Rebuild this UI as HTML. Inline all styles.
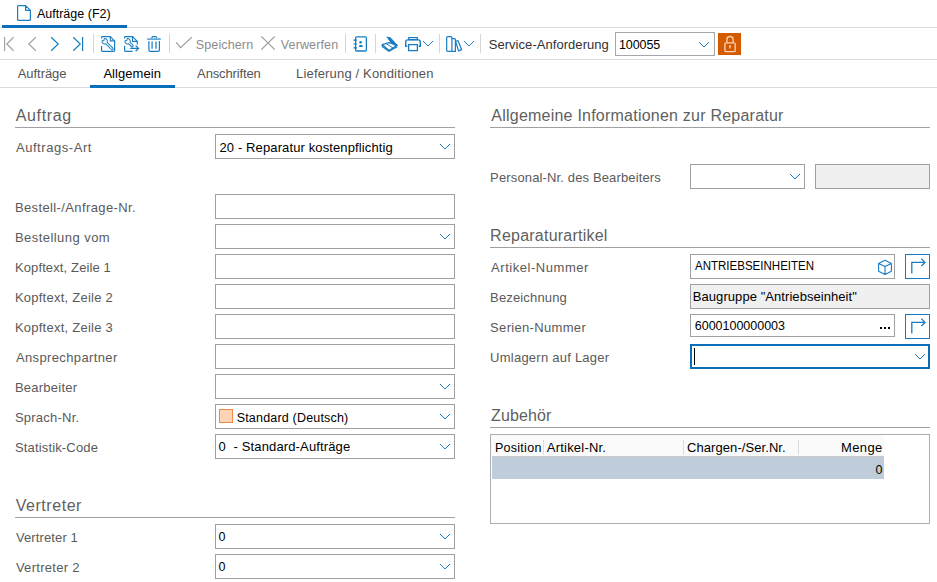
<!DOCTYPE html>
<html><head><meta charset="utf-8">
<style>
*{box-sizing:border-box}
html,body{margin:0;padding:0}
body{width:937px;height:582px;position:relative;overflow:hidden;background:#fff;font-family:"Liberation Sans",sans-serif;color:#000}
.a{position:absolute}
.t{position:absolute;white-space:nowrap;line-height:1}
</style></head><body>
<div class="a" style="left:0px;top:27px;width:937px;height:1px;background:#dadada"></div>
<div class="a" style="left:2px;top:25px;width:125px;height:3px;background:#0a6eb8"></div>
<div class="a" style="left:0px;top:59px;width:937px;height:1px;background:#dadada"></div>
<div class="a" style="left:615px;top:32px;width:100px;height:24px;border:1px solid #a4a8ae;background:#fff"></div>
<div class="a" style="left:718px;top:33px;width:23px;height:22px;background:#d45b00"></div>
<div class="a" style="left:0px;top:87px;width:937px;height:1px;background:#dadada"></div>
<div class="a" style="left:90px;top:85px;width:85px;height:3px;background:#0a6eb8"></div>
<div class="a" style="left:15px;top:127px;width:440px;height:1px;background:#a0a0a0"></div>
<div class="a" style="left:215px;top:134px;width:240px;height:25px;border:1px solid #a0a0a0;background:#fff"></div>
<div class="a" style="left:215px;top:194px;width:240px;height:25px;border:1px solid #a0a0a0;background:#fff"></div>
<div class="a" style="left:215px;top:224px;width:240px;height:25px;border:1px solid #a0a0a0;background:#fff"></div>
<div class="a" style="left:215px;top:254px;width:240px;height:25px;border:1px solid #a0a0a0;background:#fff"></div>
<div class="a" style="left:215px;top:284px;width:240px;height:25px;border:1px solid #a0a0a0;background:#fff"></div>
<div class="a" style="left:215px;top:314px;width:240px;height:25px;border:1px solid #a0a0a0;background:#fff"></div>
<div class="a" style="left:215px;top:344px;width:240px;height:25px;border:1px solid #a0a0a0;background:#fff"></div>
<div class="a" style="left:215px;top:374px;width:240px;height:25px;border:1px solid #a0a0a0;background:#fff"></div>
<div class="a" style="left:215px;top:404px;width:240px;height:25px;border:1px solid #a0a0a0;background:#fff"></div>
<div class="a" style="left:215px;top:434px;width:240px;height:25px;border:1px solid #a0a0a0;background:#fff"></div>
<div class="a" style="left:215px;top:524px;width:240px;height:25px;border:1px solid #a0a0a0;background:#fff"></div>
<div class="a" style="left:215px;top:554px;width:240px;height:25px;border:1px solid #a0a0a0;background:#fff"></div>
<div class="a" style="left:219px;top:409px;width:14px;height:14px;border:1px solid #f0884a;background:#fdd3b6"></div>
<div class="a" style="left:15px;top:517px;width:440px;height:1px;background:#a0a0a0"></div>
<div class="a" style="left:490px;top:127px;width:440px;height:1px;background:#a0a0a0"></div>
<div class="a" style="left:690px;top:164px;width:115px;height:25px;border:1px solid #a0a0a0;background:#fff"></div>
<div class="a" style="left:815px;top:164px;width:115px;height:25px;border:1px solid #a0a0a0;background:#f0f0f0"></div>
<div class="a" style="left:490px;top:247px;width:440px;height:1px;background:#a0a0a0"></div>
<div class="a" style="left:690px;top:254px;width:205px;height:25px;border:1px solid #a0a0a0;background:#fff"></div>
<div class="a" style="left:905px;top:254px;width:25px;height:25px;border:1px solid #1a78c2;background:#fff"></div>
<div class="a" style="left:690px;top:284px;width:240px;height:25px;border:1px solid #a0a0a0;background:#f0f0f0"></div>
<div class="a" style="left:690px;top:314px;width:205px;height:23px;border:1px solid #a0a0a0;background:#fff"></div>
<div class="a" style="left:905px;top:314px;width:25px;height:25px;border:1px solid #1a78c2;background:#fff"></div>
<div class="a" style="left:690px;top:344px;width:240px;height:25px;border:2px solid #0a6eb8;background:#fff"></div>
<div class="a" style="left:694px;top:348px;width:1px;height:17px;background:#000"></div>
<div class="a" style="left:490px;top:427px;width:440px;height:1px;background:#a0a0a0"></div>
<div class="a" style="left:490px;top:434px;width:440px;height:90px;border:1px solid #abadb3;background:#fff"></div>
<div class="a" style="left:491px;top:435px;width:393px;height:21px;background:#fafafa"></div>
<div class="a" style="left:492px;top:456px;width:392px;height:1px;background:#c8c8c8"></div>
<div class="a" style="left:492px;top:457px;width:392px;height:22px;background:#bfcddb"></div>
<div class="a" style="left:543px;top:440px;width:1px;height:15px;background:#dcdcdc"></div>
<div class="a" style="left:683px;top:440px;width:1px;height:15px;background:#dcdcdc"></div>
<div class="a" style="left:798px;top:440px;width:1px;height:15px;background:#dcdcdc"></div>
<div class="t" style="left:36.90px;top:8px;font-size:12.5px;color:#000;letter-spacing:0.017px;">Aufträge (F2)</div>
<div class="t" style="left:195.80px;top:39px;font-size:12.5px;color:#8c8c8c;letter-spacing:0.125px;">Speichern</div>
<div class="t" style="left:280.80px;top:39px;font-size:12.5px;color:#8c8c8c;letter-spacing:0.125px;">Verwerfen</div>
<div class="t" style="left:488.70px;top:38px;font-size:13px;color:#333;letter-spacing:0.050px;">Service-Anforderung</div>
<div class="t" style="left:618.90px;top:39px;font-size:12.5px;color:#000;letter-spacing:-0.060px;">100055</div>
<div class="t" style="left:17.70px;top:67px;font-size:13px;color:#555;letter-spacing:-0.043px;">Aufträge</div>
<div class="t" style="left:103.40px;top:67px;font-size:13px;color:#000;letter-spacing:0.062px;">Allgemein</div>
<div class="t" style="left:197.10px;top:67px;font-size:13px;color:#555;letter-spacing:-0.130px;">Anschriften</div>
<div class="t" style="left:296.10px;top:67px;font-size:13px;color:#555;letter-spacing:0.164px;">Lieferung / Konditionen</div>
<div class="t" style="left:15.70px;top:108px;font-size:16px;color:#5f5f5f;letter-spacing:0.650px;">Auftrag</div>
<div class="t" style="left:15.90px;top:141px;font-size:13px;color:#5a5a5a;letter-spacing:0.564px;">Auftrags-Art</div>
<div class="t" style="left:14.90px;top:201px;font-size:13px;color:#5a5a5a;letter-spacing:0.384px;">Bestell-/Anfrage-Nr.</div>
<div class="t" style="left:14.90px;top:231px;font-size:13px;color:#5a5a5a;letter-spacing:0.454px;">Bestellung vom</div>
<div class="t" style="left:14.90px;top:261px;font-size:13px;color:#5a5a5a;letter-spacing:0.125px;">Kopftext, Zeile 1</div>
<div class="t" style="left:14.90px;top:291px;font-size:13px;color:#5a5a5a;letter-spacing:0.244px;">Kopftext, Zeile 2</div>
<div class="t" style="left:14.90px;top:321px;font-size:13px;color:#5a5a5a;letter-spacing:0.244px;">Kopftext, Zeile 3</div>
<div class="t" style="left:15.90px;top:351px;font-size:13px;color:#5a5a5a;letter-spacing:0.379px;">Ansprechpartner</div>
<div class="t" style="left:14.90px;top:381px;font-size:13px;color:#5a5a5a;letter-spacing:0.256px;">Bearbeiter</div>
<div class="t" style="left:14.90px;top:411px;font-size:13px;color:#5a5a5a;letter-spacing:0.233px;">Sprach-Nr.</div>
<div class="t" style="left:14.90px;top:441px;font-size:13px;color:#5a5a5a;letter-spacing:0.162px;">Statistik-Code</div>
<div class="t" style="left:15.90px;top:531px;font-size:13px;color:#5a5a5a;letter-spacing:0.120px;">Vertreter 1</div>
<div class="t" style="left:15.90px;top:561px;font-size:13px;color:#5a5a5a;letter-spacing:0.280px;">Vertreter 2</div>
<div class="t" style="left:219.50px;top:141px;font-size:13px;color:#000;letter-spacing:0.117px;">20 - Reparatur kostenpflichtig</div>
<div class="t" style="left:218.60px;top:440px;font-size:13px;color:#000;letter-spacing:0.143px;">0&nbsp; - Standard-Aufträge</div>
<div class="t" style="left:218.40px;top:531px;font-size:12.5px;color:#000;">0</div>
<div class="t" style="left:218.40px;top:561px;font-size:12.5px;color:#000;">0</div>
<div class="t" style="left:236.70px;top:412px;font-size:12.5px;color:#000;letter-spacing:0.188px;">Standard (Deutsch)</div>
<div class="t" style="left:15.70px;top:498px;font-size:16px;color:#5f5f5f;letter-spacing:0.550px;">Vertreter</div>
<div class="t" style="left:491.30px;top:108px;font-size:16px;color:#5f5f5f;letter-spacing:0.227px;">Allgemeine Informationen zur Reparatur</div>
<div class="t" style="left:490.10px;top:171px;font-size:13px;color:#5a5a5a;letter-spacing:0.141px;">Personal-Nr. des Bearbeiters</div>
<div class="t" style="left:490.10px;top:228px;font-size:16px;color:#5f5f5f;letter-spacing:0.233px;">Reparaturartikel</div>
<div class="t" style="left:491.10px;top:261px;font-size:13px;color:#5a5a5a;letter-spacing:0.538px;">Artikel-Nummer</div>
<div class="t" style="left:694.80px;top:260px;font-size:12.5px;color:#000;transform:scaleX(0.9217);transform-origin:0 0;">ANTRIEBSEINHEITEN</div>
<div class="t" style="left:490.10px;top:291px;font-size:13px;color:#5a5a5a;letter-spacing:0.150px;">Bezeichnung</div>
<div class="t" style="left:692.80px;top:290px;font-size:13px;color:#000;letter-spacing:0.062px;">Baugruppe "Antriebseinheit"</div>
<div class="t" style="left:490.10px;top:321px;font-size:13px;color:#5a5a5a;letter-spacing:0.325px;">Serien-Nummer</div>
<div class="t" style="left:694.80px;top:320px;font-size:12.5px;color:#000;letter-spacing:-0.017px;">6000100000003</div>
<div class="t" style="left:490.10px;top:351px;font-size:13px;color:#5a5a5a;letter-spacing:0.241px;">Umlagern auf Lager</div>
<div class="t" style="left:491.10px;top:408px;font-size:16px;color:#5f5f5f;letter-spacing:0.117px;">Zubehör</div>
<div class="t" style="left:494.90px;top:442px;font-size:12.5px;color:#000;letter-spacing:0.286px;">Position</div>
<div class="t" style="left:546.80px;top:441px;font-size:13px;color:#000;letter-spacing:0.210px;">Artikel-Nr.</div>
<div class="t" style="left:687.00px;top:441px;font-size:13px;color:#000;letter-spacing:0.073px;">Chargen-/Ser.Nr.</div>
<div class="t" style="left:840.90px;top:441px;font-size:13px;color:#000;letter-spacing:0.425px;">Menge</div>
<div class="t" style="left:875.50px;top:464px;font-size:12.5px;color:#000;">0</div>
<svg style="position:absolute;left:0;top:0" width="937" height="582" viewBox="0 0 937 582">
<path d="M17.6 6.6 Q17.6 5.6 18.6 5.6 H25.6 L30.4 10.4 V19.4 Q30.4 20.4 29.4 20.4 H18.6 Q17.6 20.4 17.6 19.4 Z M25.6 5.6 V10.4 H30.4" fill="none" stroke="#1a7dc2" stroke-width="1.2" stroke-linejoin="round"/>
<path d="M4.6 37 V51" stroke="#a3a3a3" stroke-width="1.2"/>
<path d="M13.7 37.2 L6.8 44 L13.7 50.8" fill="none" stroke="#a3a3a3" stroke-width="1.2"/>
<path d="M35.8 37.2 L28.8 44 L35.8 50.8" fill="none" stroke="#a3a3a3" stroke-width="1.2"/>
<path d="M51.2 37.2 L58.2 44 L51.2 50.8" fill="none" stroke="#1a7dc2" stroke-width="1.2"/>
<path d="M73.3 37.2 L80.2 44 L73.3 50.8" fill="none" stroke="#1a7dc2" stroke-width="1.2"/>
<path d="M82.6 37 V51" stroke="#1a7dc2" stroke-width="1.2"/>
<path d="M93.5 34 V53" stroke="#d6d6d6" stroke-width="1"/>
<path d="M169.5 34 V53" stroke="#d6d6d6" stroke-width="1"/>
<path d="M345.5 34 V53" stroke="#d6d6d6" stroke-width="1"/>
<path d="M375.5 34 V53" stroke="#d6d6d6" stroke-width="1"/>
<path d="M439.5 34 V53" stroke="#d6d6d6" stroke-width="1"/>
<path d="M480.5 34 V53" stroke="#d6d6d6" stroke-width="1"/>
<path d="M101.6 38.4 V37.4 Q101.6 36.6 102.4 36.6 H110.3 L114.6 40.9 V50.6 Q114.6 51.4 113.8 51.4 H102.4 Q101.6 51.4 101.6 50.6 V46" fill="none" stroke="#1a7dc2" stroke-width="1.2"/>
<path d="M110.3 36.6 V40.9 H114.6" fill="none" stroke="#1a7dc2" stroke-width="1.1"/>
<g transform="translate(104.7 41.3) rotate(45)"><path d="M2.5 -1.0 A2.7 2.7 0 0 0 -2.2 -1.55 L-1.3 -0.45 V0.45 L-2.2 1.55 A2.7 2.7 0 0 0 2.5 1.0 H10.6 A1.0 1.0 0 0 0 10.6 -1.0 Z" fill="none" stroke="#1a7dc2" stroke-width="1" stroke-linejoin="round"/></g>
<path d="M124.6 38.4 V37.4 Q124.6 36.6 125.4 36.6 H132.5 L137.3 41.4 V44.6 M124.6 46 V50.6 Q124.6 51.4 125.4 51.4 H132.6" fill="none" stroke="#1a7dc2" stroke-width="1.2"/>
<path d="M132.5 36.6 V41.4 H137.3" fill="none" stroke="#1a7dc2" stroke-width="1.1"/>
<g transform="translate(127.6 41.3) rotate(45)"><path d="M2.5 -1.0 A2.7 2.7 0 0 0 -2.2 -1.55 L-1.3 -0.45 V0.45 L-2.2 1.55 A2.7 2.7 0 0 0 2.5 1.0 H6.4 A1.0 1.0 0 0 0 6.4 -1.0 Z" fill="none" stroke="#1a7dc2" stroke-width="1" stroke-linejoin="round"/></g>
<path d="M130.3 48.4 H138.6 M135.6 45.5 L138.6 48.4 L135.6 51.3" fill="none" stroke="#1a7dc2" stroke-width="1.2"/>
<path d="M151.6 38.3 L152.4 36.6 H156 L156.8 38.3" fill="none" stroke="#1a7dc2" stroke-width="1.1"/>
<path d="M147.2 39.1 H160.8" stroke="#4a9bd3" stroke-width="1.5"/>
<path d="M148.9 41 V50.2 Q148.9 51.4 150.1 51.4 H158.2 Q159.4 51.4 159.4 50.2 V41" fill="none" stroke="#1a7dc2" stroke-width="1.2"/>
<path d="M152.1 41.5 V48.8 M156 41.5 V48.8" stroke="#4a9bd3" stroke-width="1.6"/>
<path d="M176.2 42.3 L180.6 47.6 L191.8 37.2" fill="none" stroke="#9a9a9a" stroke-width="1.1"/>
<path d="M261.3 36.4 L274.8 49.6 M274.8 36.4 L261.3 49.6" fill="none" stroke="#9a9a9a" stroke-width="1.2"/>
<rect x="355.6" y="36.8" width="10.8" height="14.2" rx="1" fill="none" stroke="#1a7dc2" stroke-width="1.3"/>
<path d="M353.4 40.2 H357 M353.4 44 H357 M353.4 47.9 H357" stroke="#1a7dc2" stroke-width="1.2"/>
<circle cx="360.6" cy="42.2" r="1.3" fill="#1a7dc2"/>
<path d="M358.8 47 Q359.2 44.8 360.9 44.8 Q362.6 44.8 363 47 Z" fill="#1a7dc2"/>
<path d="M386.2 36.4 L390.4 37.2 L397.8 45.2 L396 46.4 L390.4 42.6 Z" fill="#1a7dc2"/>
<path d="M382.2 44.6 L389 42.6 L397.2 45.4 L389 50.6 Z" fill="none" stroke="#1a7dc2" stroke-width="1.3" stroke-linejoin="round"/>
<path d="M382.2 44.6 L382.4 46.6 L389 51.2 L397.2 46.8" fill="none" stroke="#1a7dc2" stroke-width="1.2"/>
<path d="M386 43.5 L393 48" stroke="#1a7dc2" stroke-width="1"/>
<rect x="408.7" y="37.6" width="8.6" height="2" fill="none" stroke="#1a7dc2" stroke-width="1.2"/>
<path d="M407.2 46.3 H405.7 V42 Q405.7 39.9 407.8 39.9 H418.2 Q420.3 39.9 420.3 42 V46.3 H418.8" fill="none" stroke="#1a7dc2" stroke-width="1.4"/>
<rect x="408.6" y="44.6" width="8.8" height="6" fill="none" stroke="#1a7dc2" stroke-width="1.3"/>
<path d="M423 41h1v1h-1zM428 45h1v1h-1zM424 42h1v1h-1zM429 44h1v1h-1zM425 43h1v1h-1zM430 43h1v1h-1zM426 44h1v1h-1zM431 42h1v1h-1zM427 45h1v1h-1zM432 41h1v1h-1z" fill="#1f7fc4" shape-rendering="crispEdges"/>
<rect x="446.7" y="36.7" width="5.2" height="14.6" rx="1" fill="none" stroke="#1a7dc2" stroke-width="1.2"/>
<path d="M451.9 38.6 H454.3 Q455.2 38.6 455.4 39.6 V51.3 H451.9" fill="none" stroke="#1a7dc2" stroke-width="1.2"/>
<path d="M455.6 41.5 L457.9 40.5 L461.6 49.6 L458.6 50.9 Z" fill="none" stroke="#1a7dc2" stroke-width="1.2" stroke-linejoin="round"/>
<path d="M464 41h1v1h-1zM469 45h1v1h-1zM465 42h1v1h-1zM470 44h1v1h-1zM466 43h1v1h-1zM471 43h1v1h-1zM467 44h1v1h-1zM472 42h1v1h-1zM468 45h1v1h-1zM473 41h1v1h-1z" fill="#1f7fc4" shape-rendering="crispEdges"/>
<path d="M699 42h1v1h-1zM704 46h1v1h-1zM700 43h1v1h-1zM705 45h1v1h-1zM701 44h1v1h-1zM706 44h1v1h-1zM702 45h1v1h-1zM707 43h1v1h-1zM703 46h1v1h-1zM708 42h1v1h-1z" fill="#1f7fc4" shape-rendering="crispEdges"/>
<path d="M726.9 42.6 V39.6 A3.1 3.1 0 0 1 733.1 39.6 V42.6" fill="none" stroke="#f9d3b8" stroke-width="1.3"/>
<rect x="724.9" y="42.9" width="10.3" height="8.7" rx="1.2" fill="none" stroke="#f9d3b8" stroke-width="1.3"/>
<circle cx="730" cy="46.2" r="1" fill="#f9d3b8"/><path d="M730 46.5 V48.6" stroke="#f9d3b8" stroke-width="1"/>
<path d="M440 144h1v1h-1zM445 148h1v1h-1zM441 145h1v1h-1zM446 147h1v1h-1zM442 146h1v1h-1zM447 146h1v1h-1zM443 147h1v1h-1zM448 145h1v1h-1zM444 148h1v1h-1zM449 144h1v1h-1z" fill="#1f7fc4" shape-rendering="crispEdges"/>
<path d="M440 234h1v1h-1zM445 238h1v1h-1zM441 235h1v1h-1zM446 237h1v1h-1zM442 236h1v1h-1zM447 236h1v1h-1zM443 237h1v1h-1zM448 235h1v1h-1zM444 238h1v1h-1zM449 234h1v1h-1z" fill="#1f7fc4" shape-rendering="crispEdges"/>
<path d="M440 384h1v1h-1zM445 388h1v1h-1zM441 385h1v1h-1zM446 387h1v1h-1zM442 386h1v1h-1zM447 386h1v1h-1zM443 387h1v1h-1zM448 385h1v1h-1zM444 388h1v1h-1zM449 384h1v1h-1z" fill="#1f7fc4" shape-rendering="crispEdges"/>
<path d="M440 414h1v1h-1zM445 418h1v1h-1zM441 415h1v1h-1zM446 417h1v1h-1zM442 416h1v1h-1zM447 416h1v1h-1zM443 417h1v1h-1zM448 415h1v1h-1zM444 418h1v1h-1zM449 414h1v1h-1z" fill="#1f7fc4" shape-rendering="crispEdges"/>
<path d="M440 444h1v1h-1zM445 448h1v1h-1zM441 445h1v1h-1zM446 447h1v1h-1zM442 446h1v1h-1zM447 446h1v1h-1zM443 447h1v1h-1zM448 445h1v1h-1zM444 448h1v1h-1zM449 444h1v1h-1z" fill="#1f7fc4" shape-rendering="crispEdges"/>
<path d="M440 534h1v1h-1zM445 538h1v1h-1zM441 535h1v1h-1zM446 537h1v1h-1zM442 536h1v1h-1zM447 536h1v1h-1zM443 537h1v1h-1zM448 535h1v1h-1zM444 538h1v1h-1zM449 534h1v1h-1z" fill="#1f7fc4" shape-rendering="crispEdges"/>
<path d="M440 564h1v1h-1zM445 568h1v1h-1zM441 565h1v1h-1zM446 567h1v1h-1zM442 566h1v1h-1zM447 566h1v1h-1zM443 567h1v1h-1zM448 565h1v1h-1zM444 568h1v1h-1zM449 564h1v1h-1z" fill="#1f7fc4" shape-rendering="crispEdges"/>
<path d="M790 174h1v1h-1zM795 178h1v1h-1zM791 175h1v1h-1zM796 177h1v1h-1zM792 176h1v1h-1zM797 176h1v1h-1zM793 177h1v1h-1zM798 175h1v1h-1zM794 178h1v1h-1zM799 174h1v1h-1z" fill="#1f7fc4" shape-rendering="crispEdges"/>
<path d="M885 260.2 L891.4 263.4 V271.2 L885 274.4 L878.6 271.2 V263.4 Z M878.6 263.4 L885 266.6 L891.4 263.4 M885 266.6 V274.4" fill="none" stroke="#1a7dc2" stroke-width="1.1" stroke-linejoin="round"/>
<path d="M911.8 273.6 V262.4 H924.6 M921.4 258.8 L925 262.4 L921.4 266" fill="none" stroke="#1a7dc2" stroke-width="1.3"/>
<path d="M880 327h2v2h-2z M884 327h2v2h-2z M888 327h2v2h-2z" fill="#000" shape-rendering="crispEdges"/>
<path d="M911.8 333.6 V322.4 H924.6 M921.4 318.8 L925 322.4 L921.4 326" fill="none" stroke="#1a7dc2" stroke-width="1.3"/>
<path d="M915 354h1v1h-1zM920 358h1v1h-1zM916 355h1v1h-1zM921 357h1v1h-1zM917 356h1v1h-1zM922 356h1v1h-1zM918 357h1v1h-1zM923 355h1v1h-1zM919 358h1v1h-1zM924 354h1v1h-1z" fill="#1f7fc4" shape-rendering="crispEdges"/>
</svg>
</body></html>
